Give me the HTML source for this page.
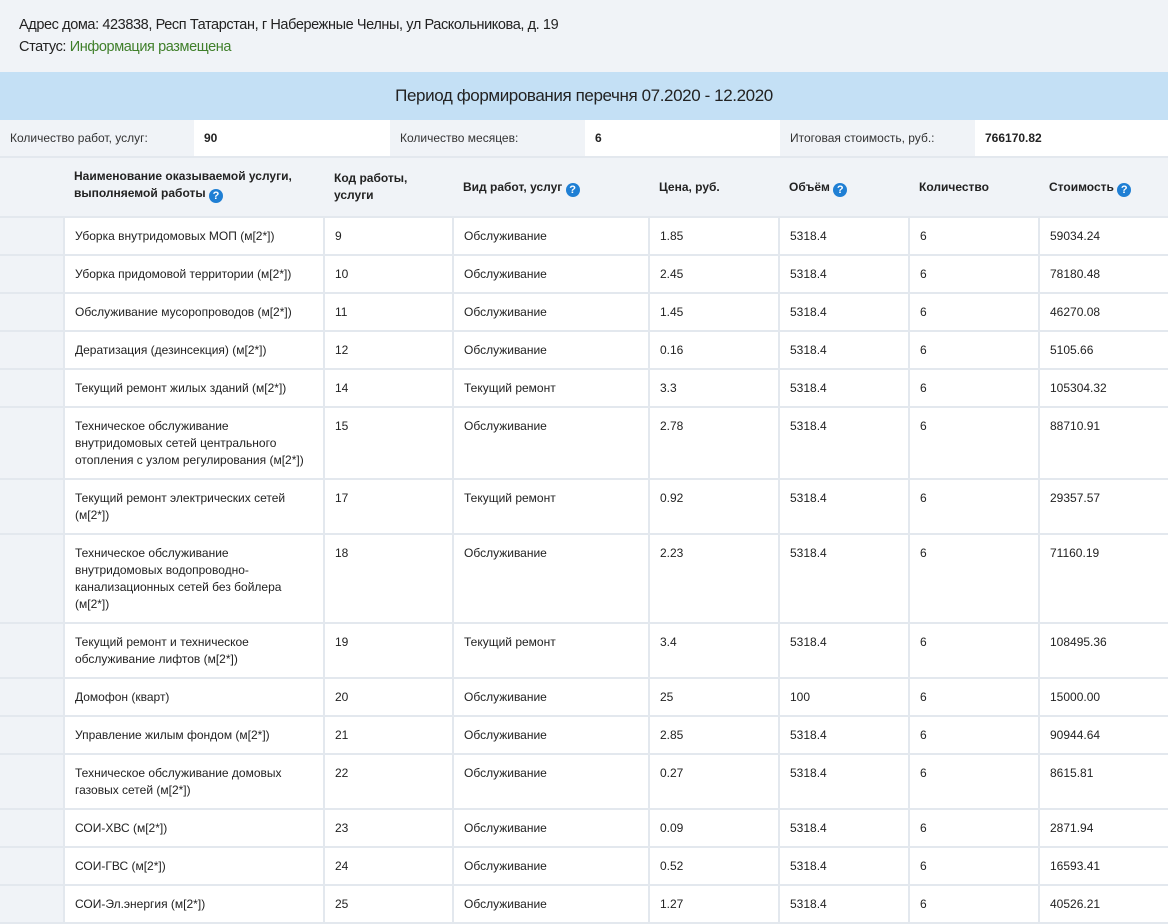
<!DOCTYPE html>
<html><head><meta charset="utf-8"><style>
body{margin:0;background:#fff;font-family:"Liberation Sans",Arial,sans-serif;width:1168px;height:924px;overflow:hidden}
.top{background:#f0f3f7;height:72px;padding:14px 0 0 19px;box-sizing:border-box;font-size:14.5px;line-height:22px;color:#222;letter-spacing:-0.4px}
.top .g{color:#3f7f2a}
.band{background:#c4e0f5;height:48px;text-align:center;font-size:17px;line-height:48px;color:#222;letter-spacing:-0.4px}
.sum{display:flex;height:38px;border-bottom:2px solid #e3e8ee;box-sizing:border-box;font-size:12px}
.sum div{line-height:36px;padding-left:10px;box-sizing:border-box}
.sum .l{background:#f0f3f7;color:#333}
.sum .v{background:#fff;font-weight:bold;color:#222}
table{border-collapse:collapse;table-layout:fixed;width:1168px;font-size:12px;color:#222}
td,th{vertical-align:top;padding:10px 10px 9px;line-height:17px;text-align:left;border-left:2px solid #e3e8ee;border-bottom:2px solid #e3e8ee}
td:first-child,th:first-child{background:#f0f3f7;border-left:none}
th{background:#f0f3f7;font-weight:bold;height:37px;padding-top:10px;vertical-align:middle;border-left:none}
.q{display:inline-block;width:14px;height:14px;border-radius:50%;background:#1f7fd4;color:#fff;font-size:11px;line-height:14px;text-align:center;font-weight:bold;vertical-align:-2px}
</style></head><body>
<div class="top">Адрес дома: 423838, Респ Татарстан, г Набережные Челны, ул Раскольникова, д. 19<br>Статус: <span class="g">Информация размещена</span></div>
<div class="band">Период формирования перечня 07.2020 - 12.2020</div>
<div class="sum"><div class="l" style="width:194px">Количество работ, услуг:</div><div class="v" style="width:196px">90</div><div class="l" style="width:195px">Количество месяцев:</div><div class="v" style="width:195px">6</div><div class="l" style="width:195px">Итоговая стоимость, руб.:</div><div class="v" style="width:193px">766170.82</div></div>
<table>
<colgroup><col style="width:64px"><col style="width:260px"><col style="width:129px"><col style="width:196px"><col style="width:130px"><col style="width:130px"><col style="width:130px"><col style="width:129px"></colgroup>
<tr><th></th><th style="vertical-align:top;padding-top:10px">Наименование оказываемой услуги, выполняемой работы <span class="q">?</span></th><th style="vertical-align:top;padding-top:12px">Код работы, услуги</th><th>Вид работ, услуг <span class="q">?</span></th><th>Цена, руб.</th><th>Объём <span class="q">?</span></th><th>Количество</th><th>Стоимость <span class="q">?</span></th></tr>
<tr><td></td><td>Уборка внутридомовых МОП (м[2*])</td><td>9</td><td>Обслуживание</td><td>1.85</td><td>5318.4</td><td>6</td><td>59034.24</td></tr>
<tr><td></td><td>Уборка придомовой территории (м[2*])</td><td>10</td><td>Обслуживание</td><td>2.45</td><td>5318.4</td><td>6</td><td>78180.48</td></tr>
<tr><td></td><td>Обслуживание мусоропроводов (м[2*])</td><td>11</td><td>Обслуживание</td><td>1.45</td><td>5318.4</td><td>6</td><td>46270.08</td></tr>
<tr><td></td><td>Дератизация (дезинсекция) (м[2*])</td><td>12</td><td>Обслуживание</td><td>0.16</td><td>5318.4</td><td>6</td><td>5105.66</td></tr>
<tr><td></td><td>Текущий ремонт жилых зданий (м[2*])</td><td>14</td><td>Текущий ремонт</td><td>3.3</td><td>5318.4</td><td>6</td><td>105304.32</td></tr>
<tr><td></td><td>Техническое обслуживание внутридомовых сетей центрального отопления с узлом регулирования (м[2*])</td><td>15</td><td>Обслуживание</td><td>2.78</td><td>5318.4</td><td>6</td><td>88710.91</td></tr>
<tr><td></td><td>Текущий ремонт электрических сетей (м[2*])</td><td>17</td><td>Текущий ремонт</td><td>0.92</td><td>5318.4</td><td>6</td><td>29357.57</td></tr>
<tr><td></td><td>Техническое обслуживание внутридомовых водопроводно-канализационных сетей без бойлера (м[2*])</td><td>18</td><td>Обслуживание</td><td>2.23</td><td>5318.4</td><td>6</td><td>71160.19</td></tr>
<tr><td></td><td>Текущий ремонт и техническое обслуживание лифтов (м[2*])</td><td>19</td><td>Текущий ремонт</td><td>3.4</td><td>5318.4</td><td>6</td><td>108495.36</td></tr>
<tr><td></td><td>Домофон (кварт)</td><td>20</td><td>Обслуживание</td><td>25</td><td>100</td><td>6</td><td>15000.00</td></tr>
<tr><td></td><td>Управление жилым фондом (м[2*])</td><td>21</td><td>Обслуживание</td><td>2.85</td><td>5318.4</td><td>6</td><td>90944.64</td></tr>
<tr><td></td><td>Техническое обслуживание домовых газовых сетей (м[2*])</td><td>22</td><td>Обслуживание</td><td>0.27</td><td>5318.4</td><td>6</td><td>8615.81</td></tr>
<tr><td></td><td>СОИ-ХВС (м[2*])</td><td>23</td><td>Обслуживание</td><td>0.09</td><td>5318.4</td><td>6</td><td>2871.94</td></tr>
<tr><td></td><td>СОИ-ГВС (м[2*])</td><td>24</td><td>Обслуживание</td><td>0.52</td><td>5318.4</td><td>6</td><td>16593.41</td></tr>
<tr><td></td><td>СОИ-Эл.энергия (м[2*])</td><td>25</td><td>Обслуживание</td><td>1.27</td><td>5318.4</td><td>6</td><td>40526.21</td></tr>
</table>
</body></html>
